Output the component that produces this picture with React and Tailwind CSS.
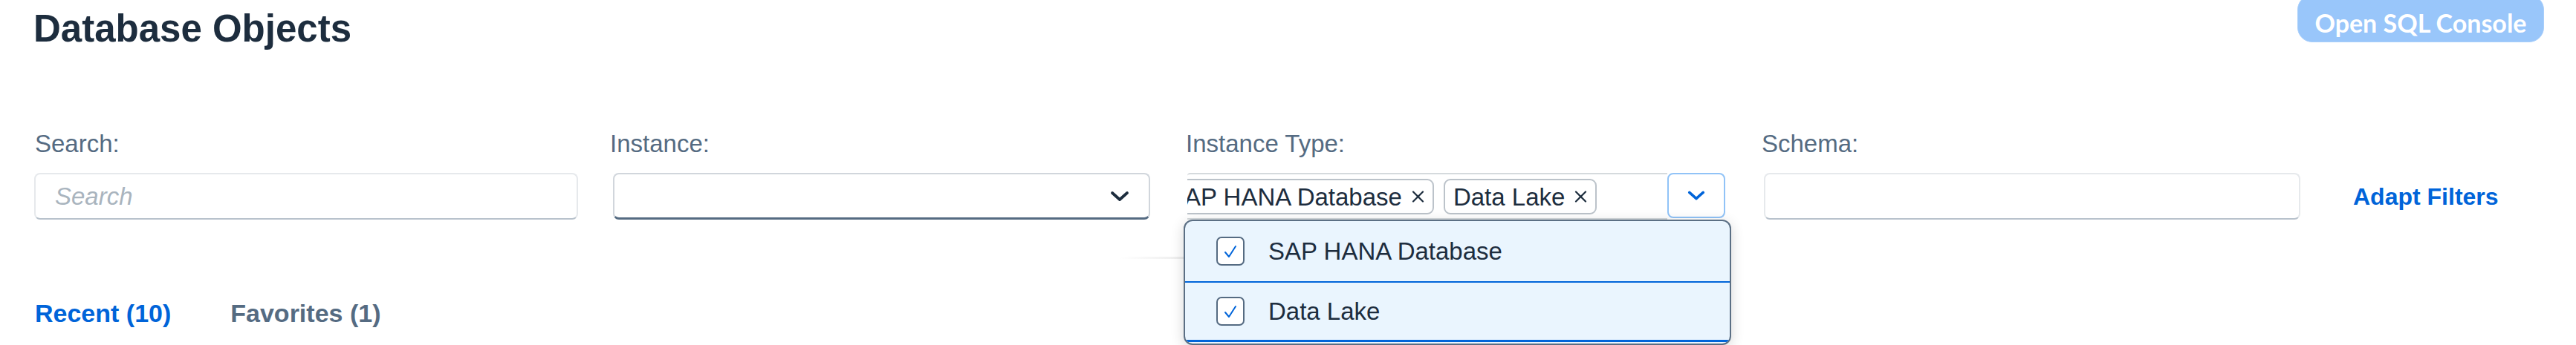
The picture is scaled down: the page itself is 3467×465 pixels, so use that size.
import React from "react";

function Chevron({ color = "#1d2d3e", className = "" }) {
  return (
    <svg viewBox="0 0 26 15" className={className} fill="none">
      <polyline points="3,3 13,12 23,3" stroke={color} strokeWidth="3.8" strokeLinecap="round" strokeLinejoin="round" />
    </svg>
  );
}

function XIcon() {
  return (
    <svg viewBox="0 0 19 16" className="w-[19px] h-[16px] shrink-0" fill="none">
      <line x1="3" y1="1.5" x2="16" y2="14.5" stroke="#1d2d3e" strokeWidth="2.2" strokeLinecap="round" />
      <line x1="16" y1="1.5" x2="3" y2="14.5" stroke="#1d2d3e" strokeWidth="2.2" strokeLinecap="round" />
    </svg>
  );
}

function Token({ label, className = "" }) {
  return (
    <div className={"h-[48px] shrink-0 flex items-center gap-[12px] pl-[11px] pr-[10px] border-2 border-[#bcc3ca] rounded-[9px] bg-white " + className}>
      <span className="text-[33px] leading-[33px] text-[#1d2d3e] whitespace-nowrap">{label}</span>
      <XIcon />
    </div>
  );
}

function Check() {
  return (
    <div className="w-[38px] h-[39px] shrink-0 rounded-[7px] border-2 border-[#556b82] bg-white flex items-center justify-center">
      <svg viewBox="0 0 24 24" className="w-[24px] h-[24px]" fill="none">
        <polyline points="5,13 10,19 19,5" stroke="#0064d9" strokeWidth="2" strokeLinecap="round" strokeLinejoin="round" />
      </svg>
    </div>
  );
}

function Label({ children }) {
  return <div className="text-[33px] leading-[33px] text-[#556b82] whitespace-nowrap">{children}</div>;
}

export default function App() {
  return (
    <div className="w-[3467px] h-[465px] overflow-hidden bg-white font-['Liberation_Sans',Arial,sans-serif] text-[#1d2d3e]">
      {/* Header */}
      <div className="flex justify-between items-start pl-[45px] pr-[43px]">
        <h1 className="mt-[13px] text-[51px] leading-[51px] font-bold text-[#1d2d3e] whitespace-nowrap">Database Objects</h1>
        <button className="mt-[-7px] h-[64px] w-[332px] rounded-[20px] bg-[#99c6fa] border border-[#a9cffb] text-white font-bold text-[34px] leading-[34px] font-['Lato','Liberation_Sans',sans-serif] pt-[12px]">
          Open SQL Console
        </button>
      </div>

      {/* Filter bar */}
      <div className="flex items-start mt-[113px] pl-[46px]">
        {/* Search */}
        <div className="w-[732px] flex flex-col">
          <div className="pl-[1px]"><Label>Search:</Label></div>
          <div className="mt-[23px] h-[63px] rounded-[8px] border-2 border-[#e6e9ec] border-b-[#b8c2cc] flex items-center pl-[26px]">
            <span className="italic text-[33px] leading-[33px] text-[#a9b4be]">Search</span>
          </div>
        </div>

        {/* Instance */}
        <div className="w-[723px] ml-[47px] flex flex-col">
          <div className="ml-[-4px]"><Label>Instance:</Label></div>
          <div className="mt-[23px] h-[63px] rounded-[8px] border-2 border-[#d1d6dc] border-b-[3px] border-b-[#556b82] flex items-center justify-end pr-[26px]">
            <Chevron className="w-[26px] h-[15px]" />
          </div>
        </div>

        {/* Instance Type */}
        <div className="w-[724px] ml-[50px] flex flex-col relative">
          <div className="ml-[-2px]"><Label>Instance Type:</Label></div>
          <div className="mt-[23px] h-[63px] flex">
            <div className="flex-1 min-w-0 overflow-hidden border-t-2 border-b-2 border-[#d5dadd] rounded-tl-[4px] flex items-start pt-[6px] gap-[13px]">
              <Token label="SAP HANA Database" className="ml-[-39px]" />
              <Token label="Data Lake" />
            </div>
            <div className="w-[78px] h-[61px] shrink-0 rounded-[8px] border-2 border-[#91c3f7] bg-white flex items-center justify-center">
              <Chevron color="#0064d9" className="w-[24px] h-[15px]" />
            </div>
          </div>

          {/* Dropdown popover */}
          <div className="absolute left-[-5px] top-[119px] w-[737px] h-[169px] rounded-[12px] border-2 border-[#5b6f84] bg-[#eaf5fe] shadow-[0_4px_18px_rgba(0,0,0,0.16)] overflow-hidden z-10 flex flex-col">
            <div className="h-[81px] shrink-0 flex items-center pl-[42px] gap-[32px]">
              <Check />
              <span className="text-[33px] leading-[33px] text-[#1d2d3e] whitespace-nowrap">SAP HANA Database</span>
            </div>
            <div className="h-[2px] shrink-0 bg-[#0064d9]" />
            <div className="h-[77px] shrink-0 flex items-center pl-[42px] gap-[32px]">
              <Check />
              <span className="text-[33px] leading-[33px] text-[#1d2d3e] whitespace-nowrap">Data Lake</span>
            </div>
            <div className="h-[3px] shrink-0 bg-[#0064d9]" />
          </div>
          <div className="absolute left-[-91px] top-[169px] w-[88px] h-[3px] bg-gradient-to-r from-transparent to-[#ececec]" />
        </div>

        {/* Schema */}
        <div className="w-[722px] ml-[52px] flex flex-col">
          <div className="ml-[-3px]"><Label>Schema:</Label></div>
          <div className="mt-[23px] h-[63px] rounded-[8px] border-2 border-[#e6e9ec] border-b-[#b8c2cc]" />
        </div>

        {/* Adapt Filters */}
        <div className="ml-[71px] mt-[56px] h-[63px] flex items-center">
          <span className="text-[32px] leading-[32px] font-bold text-[#0064d9] whitespace-nowrap">Adapt Filters</span>
        </div>
      </div>

      {/* Tabs */}
      <div className="flex items-start mt-[109px] pl-[47px] gap-[80px]">
        <span className="text-[34px] leading-[34px] font-bold text-[#0064d9] whitespace-nowrap">Recent (10)</span>
        <span className="text-[34px] leading-[34px] font-bold text-[#556b82] whitespace-nowrap">Favorites (1)</span>
      </div>
    </div>
  );
}
